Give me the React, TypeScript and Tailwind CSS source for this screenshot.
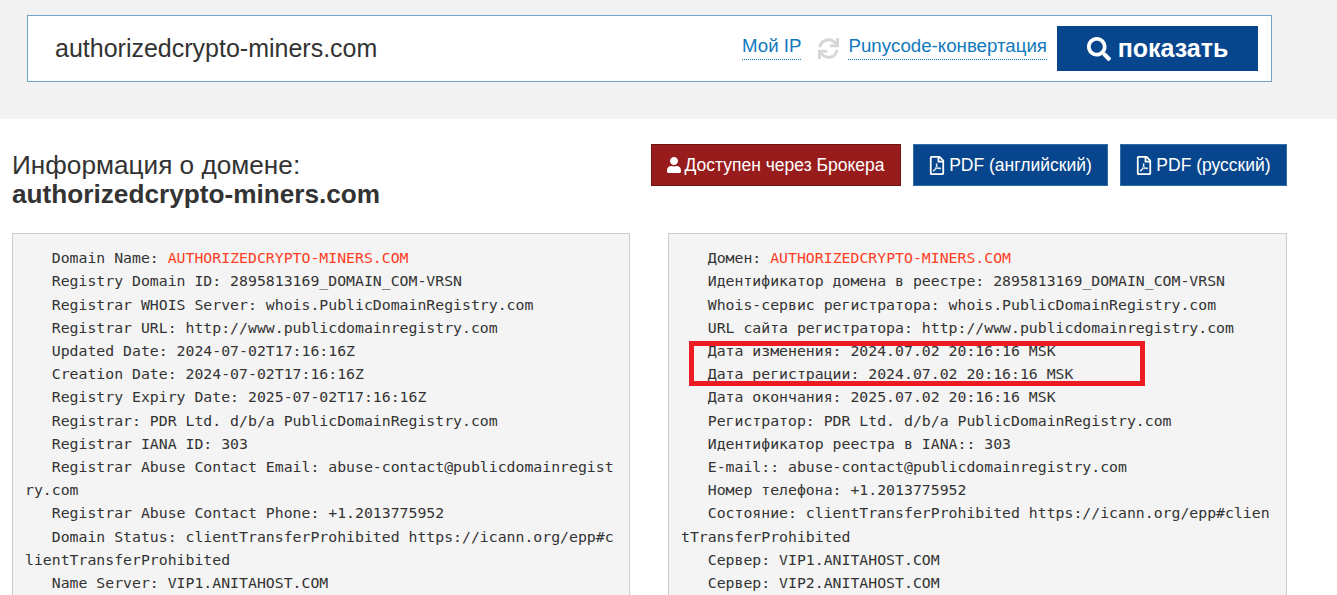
import { FaRegFilePdf, FaSearch, FaSync, FaUser } from "react-icons/fa";

const leftLines = [
  "Registry Domain ID: 2895813169_DOMAIN_COM-VRSN",
  "Registrar WHOIS Server: whois.PublicDomainRegistry.com",
  "Registrar URL: http://www.publicdomainregistry.com",
  "Updated Date: 2024-07-02T17:16:16Z",
  "Creation Date: 2024-07-02T17:16:16Z",
  "Registry Expiry Date: 2025-07-02T17:16:16Z",
  "Registrar: PDR Ltd. d/b/a PublicDomainRegistry.com",
  "Registrar IANA ID: 303",
  "Registrar Abuse Contact Email: abuse-contact@publicdomainregistry.com",
  "Registrar Abuse Contact Phone: +1.2013775952",
  "Domain Status: clientTransferProhibited https://icann.org/epp#clientTransferProhibited",
  "Name Server: VIP1.ANITAHOST.COM",
];

const rightLines = [
  "Идентификатор домена в реестре: 2895813169_DOMAIN_COM-VRSN",
  "Whois-сервис регистратора: whois.PublicDomainRegistry.com",
  "URL сайта регистратора: http://www.publicdomainregistry.com",
  "Дата изменения: 2024.07.02 20:16:16 MSK",
  "Дата регистрации: 2024.07.02 20:16:16 MSK",
  "Дата окончания: 2025.07.02 20:16:16 MSK",
  "Регистратор: PDR Ltd. d/b/a PublicDomainRegistry.com",
  "Идентификатор реестра в IANA:: 303",
  "E-mail:: abuse-contact@publicdomainregistry.com",
  "Номер телефона: +1.2013775952",
  "Состояние: clientTransferProhibited https://icann.org/epp#clientTransferProhibited",
  "Сервер: VIP1.ANITAHOST.COM",
  "Сервер: VIP2.ANITAHOST.COM",
];

const WhoisPanel = ({ label, lines, width }: { label: string; lines: string[]; width: string }) => {
  return (
    <pre
      className={`${width} h-[400px] shrink-0 border border-[#cccccc] bg-[#f4f4f4] px-3 pt-[12.2px] font-['DejaVu_Sans_Mono',monospace] text-[14.82px] leading-[23.2px] text-[#333333] whitespace-pre-wrap break-all`}
    >
      {"   " + label + " "}
      <span className="text-[#ff3d1f]">AUTHORIZEDCRYPTO-MINERS.COM</span>
      {lines.map((line) => "\n   " + line).join("")}
    </pre>
  );
};

const PdfButton = ({ label, width }: { label: string; width: string }) => {
  return (
    <button
      className={`${width} h-[42px] flex items-center justify-center gap-[4px] border border-[#2f6ea5] bg-[#07468d] text-white text-[17.5px]`}
    >
      <FaRegFilePdf className="w-[16px] h-[19px]" />
      {label}
    </button>
  );
};

export default function App() {
  return (
    <main className="relative w-[1337px] h-[595px] overflow-hidden bg-white font-['Liberation_Sans',Arial,sans-serif] text-[#333333]">
      <section className="h-[119px] bg-[#f2f2f2] pt-[15px] pl-[27px]">
        <div className="w-[1245px] h-[67px] flex items-center border border-[#6fa3c7] bg-white pl-[27px] pr-[13px]">
          <span className="text-[25px] text-[#333333]">authorizedcrypto-miners.com</span>
          <a className="ml-auto pb-[1px] mt-[-3px] border-b border-dotted border-[#0b76b8] text-[18.7px] leading-[24px] text-[#1179bd]">
            Мой IP
          </a>
          <FaSync className="ml-[17px] mr-[9px] w-[21px] h-[21px] text-[#d6d6d6]" />
          <a className="pb-[1px] mt-[-3px] border-b border-dotted border-[#0b76b8] text-[18.7px] leading-[24px] text-[#1179bd]">
            Punycode-конвертация
          </a>
          <button className="ml-[10px] w-[201px] h-[45px] flex items-center justify-center gap-[7px] bg-[#07468d] text-white text-[25px] font-bold">
            <FaSearch className="w-[24px] h-[24px]" />
            показать
          </button>
        </div>
      </section>

      <section className="flex items-start pt-[25px] pl-[12px] h-[114px]">
        <h1 className="w-[639px] text-[26.2px] leading-[29px] pt-[7px] text-[#333333]">
          Информация о домене:
          <br />
          <b>authorizedcrypto-miners.com</b>
        </h1>
        <div className="flex gap-3">
          <button className="w-[250px] h-[42px] flex items-center justify-center gap-[3px] border border-[#6e1414] bg-[#991c1c] text-white text-[17.5px]">
            <FaUser className="w-[14px] h-[16px]" />
            Доступен через Брокера
          </button>
          <PdfButton label="PDF (английский)" width="w-[195px]" />
          <PdfButton label="PDF (русский)" width="w-[167px]" />
        </div>
      </section>

      <section className="flex gap-[38px] pl-[12px]">
        <WhoisPanel label="Domain Name:" lines={leftLines} width="w-[618px]" />
        <WhoisPanel label="Домен:" lines={rightLines} width="w-[619px]" />
      </section>

      <div className="absolute left-[689px] top-[341px] w-[456px] h-[45px] border-[5px] border-[#ed1c24]" />
    </main>
  );
}
